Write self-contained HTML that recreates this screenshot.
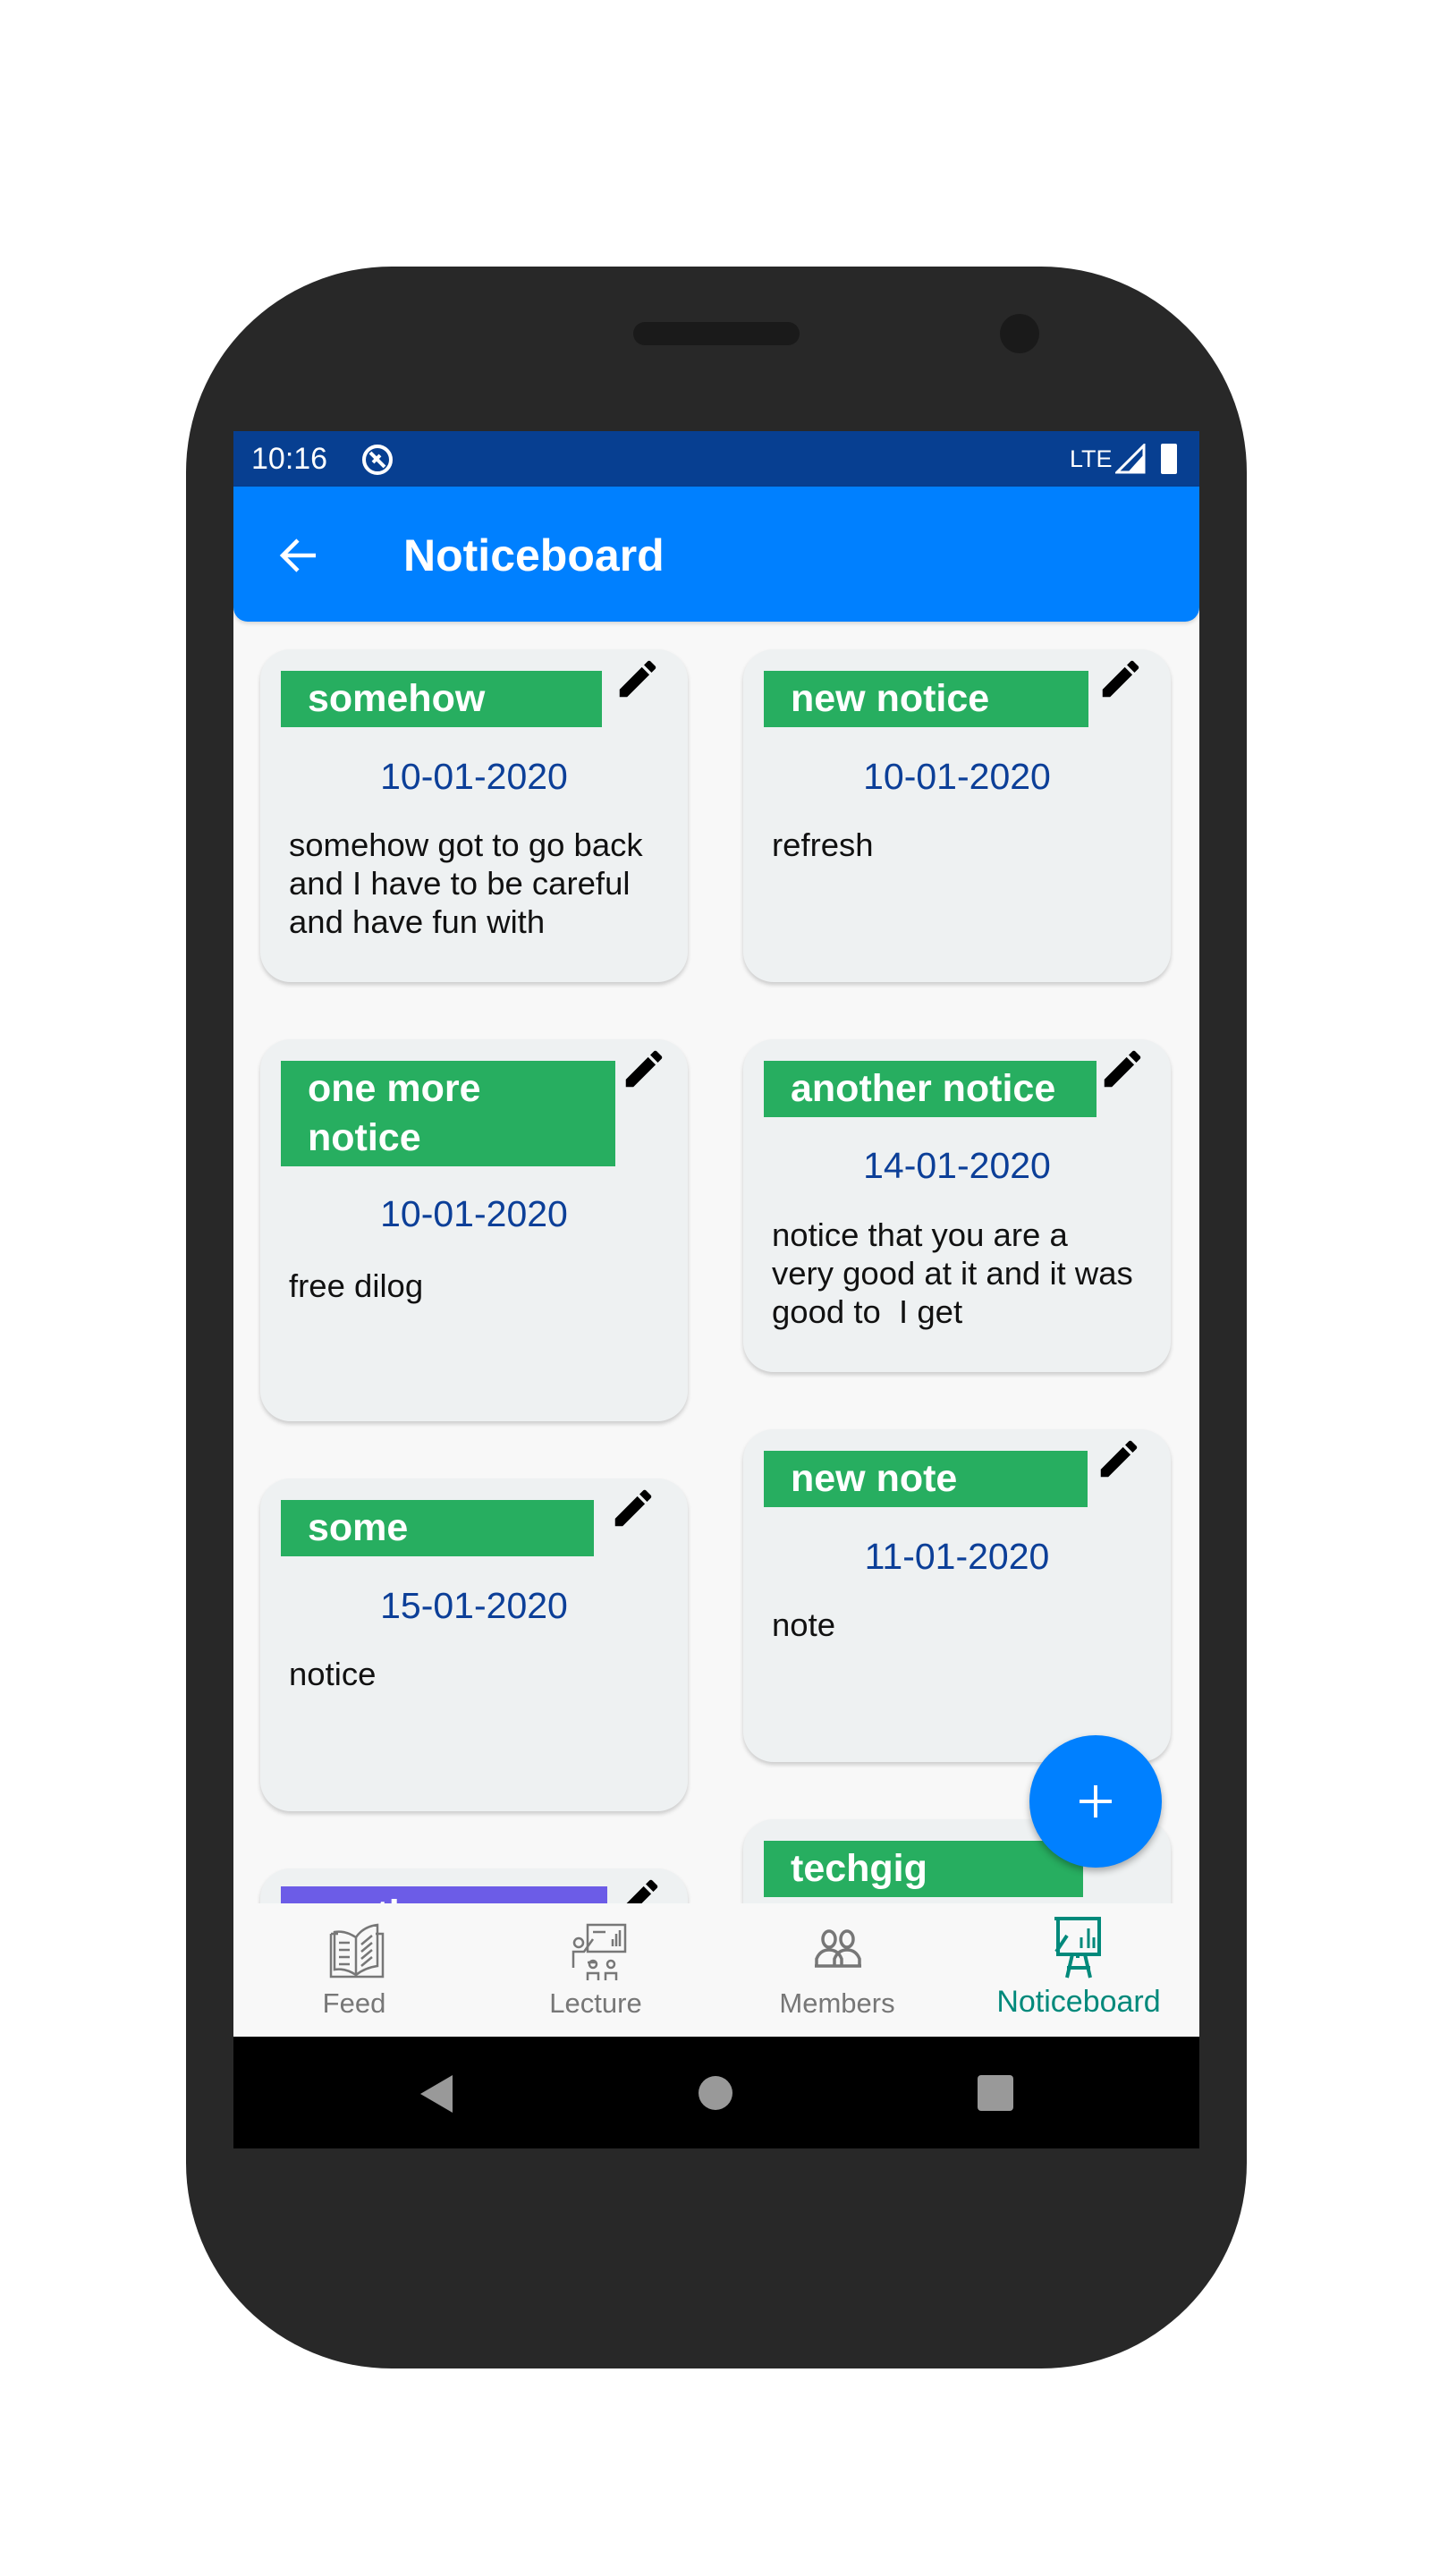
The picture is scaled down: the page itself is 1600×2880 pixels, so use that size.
<!DOCTYPE html>
<html><head><meta charset="utf-8"><style>
*{margin:0;padding:0;box-sizing:border-box}
body{width:1600px;height:2880px;background:#fff;position:relative;overflow:hidden;font-family:"Liberation Sans",sans-serif}
.abs{position:absolute}
.phone{left:208px;top:298px;width:1186px;height:2350px;background:#282828;border-radius:230px}
.screen{left:261px;top:482px;width:1080px;height:1920px;background:#f8f8f8;overflow:hidden}
.card{position:absolute;width:478px;background:#eef1f2;border-radius:34px;box-shadow:0 3px 5px rgba(0,0,0,.18)}
.lbl{position:absolute;left:23px;top:24px;height:63px;background:#27ae60;color:#fff;font-weight:bold;font-size:43px;padding-left:30px;line-height:63px}
.pen{position:absolute;top:6px;width:54px;height:54px}
.date{position:absolute;left:0;width:100%;text-align:center;color:#0c3f98;font-size:41px}
.body{position:absolute;left:32px;color:#111;font-size:36.5px;line-height:43px}
.nav{position:absolute;top:1740px;width:270px;text-align:center;font-size:31px;color:#777}
</style></head><body>
<div class="abs phone"></div>
<div class="abs" style="left:708px;top:360px;width:186px;height:26px;border-radius:13px;background:#1a1a1a"></div>
<div class="abs" style="left:1118px;top:351px;width:44px;height:44px;border-radius:50%;background:#1a1a1a"></div>
<div class="abs screen">
 <div class="abs" style="left:0;top:0;width:1080px;height:62px;background:#073f91"></div>
 <div class="abs" style="left:20px;top:12px;color:#fff;font-size:34px">10:16</div>
 <svg class="abs" style="left:142px;top:13px" width="38" height="38" viewBox="0 0 38 38"><circle cx="19" cy="19" r="15" fill="none" stroke="#fff" stroke-width="4"/><path d="M11 11 L27 27 M14 22 L22 14" stroke="#fff" stroke-width="4"/></svg>
 <div class="abs" style="left:935px;top:16px;color:#fff;font-size:27px">LTE</div>
 <svg class="abs" style="left:986px;top:14px" width="34" height="34"><path d="M32 2 L32 32 L2 32 Z" fill="none" stroke="#fff" stroke-width="3"/><path d="M32 12 L32 32 L14 32Z" fill="#fff"/></svg>
 <div class="abs" style="left:1037px;top:14px;width:18px;height:34px;background:#fff;border-radius:2px"></div>
 <div class="abs" style="left:0;top:62px;width:1080px;height:151px;background:#0080ff;border-radius:0 0 16px 16px;box-shadow:0 2px 4px rgba(0,0,0,.15)"></div>
 <svg class="abs" style="left:50px;top:116px" width="46" height="46" viewBox="0 0 46 46"><path d="M42 23 H6 M22 6 L5 23 L22 40" fill="none" stroke="#fff" stroke-width="4.5"/></svg>
 <div class="abs" style="left:190px;top:110px;color:#fff;font-size:50px;font-weight:bold">Noticeboard</div>

 <div class="card" style="left:30px;top:244px;height:372px">
  <div class="lbl" style="width:359px">somehow</div>
  <svg class="pen" style="left:395px" viewBox="0 0 24 24"><path d="M3 17.25V21h3.75L17.81 9.94l-3.75-3.75L3 17.25zM20.71 7.04a1 1 0 0 0 0-1.41l-2.34-2.34a1 1 0 0 0-1.41 0l-1.83 1.83 3.75 3.75 1.83-1.83z"/></svg>
  <div class="date" style="top:119px">10-01-2020</div>
  <div class="body" style="top:197px">somehow got to go back<br>and I have to be careful<br>and have fun with</div>
 </div>
 <div class="card" style="left:570px;top:244px;height:372px">
  <div class="lbl" style="width:363px">new notice</div>
  <svg class="pen" style="left:395px" viewBox="0 0 24 24"><path d="M3 17.25V21h3.75L17.81 9.94l-3.75-3.75L3 17.25zM20.71 7.04a1 1 0 0 0 0-1.41l-2.34-2.34a1 1 0 0 0-1.41 0l-1.83 1.83 3.75 3.75 1.83-1.83z"/></svg>
  <div class="date" style="top:119px">10-01-2020</div>
  <div class="body" style="top:197px">refresh</div>
 </div>

 <div class="card" style="left:30px;top:680px;height:427px">
  <div class="lbl" style="width:374px;height:118px;line-height:55px;padding-top:4px">one more<br>notice</div>
  <svg class="pen" style="left:402px;top:6px" viewBox="0 0 24 24"><path d="M3 17.25V21h3.75L17.81 9.94l-3.75-3.75L3 17.25zM20.71 7.04a1 1 0 0 0 0-1.41l-2.34-2.34a1 1 0 0 0-1.41 0l-1.83 1.83 3.75 3.75 1.83-1.83z"/></svg>
  <div class="date" style="top:172px">10-01-2020</div>
  <div class="body" style="top:254px">free dilog</div>
 </div>
 <div class="card" style="left:570px;top:680px;height:372px">
  <div class="lbl" style="width:372px">another notice</div>
  <svg class="pen" style="left:397px" viewBox="0 0 24 24"><path d="M3 17.25V21h3.75L17.81 9.94l-3.75-3.75L3 17.25zM20.71 7.04a1 1 0 0 0 0-1.41l-2.34-2.34a1 1 0 0 0-1.41 0l-1.83 1.83 3.75 3.75 1.83-1.83z"/></svg>
  <div class="date" style="top:118px">14-01-2020</div>
  <div class="body" style="top:197px">notice that you are a<br>very good at it and it was<br>good to &nbsp;I get</div>
 </div>

 <div class="card" style="left:30px;top:1171px;height:372px">
  <div class="lbl" style="width:350px">some</div>
  <svg class="pen" style="left:390px" viewBox="0 0 24 24"><path d="M3 17.25V21h3.75L17.81 9.94l-3.75-3.75L3 17.25zM20.71 7.04a1 1 0 0 0 0-1.41l-2.34-2.34a1 1 0 0 0-1.41 0l-1.83 1.83 3.75 3.75 1.83-1.83z"/></svg>
  <div class="date" style="top:119px">15-01-2020</div>
  <div class="body" style="top:197px">notice</div>
 </div>
 <div class="card" style="left:570px;top:1116px;height:372px">
  <div class="lbl" style="width:362px">new note</div>
  <svg class="pen" style="left:393px" viewBox="0 0 24 24"><path d="M3 17.25V21h3.75L17.81 9.94l-3.75-3.75L3 17.25zM20.71 7.04a1 1 0 0 0 0-1.41l-2.34-2.34a1 1 0 0 0-1.41 0l-1.83 1.83 3.75 3.75 1.83-1.83z"/></svg>
  <div class="date" style="top:119px">11-01-2020</div>
  <div class="body" style="top:197px">note</div>
 </div>

 <div class="card" style="left:30px;top:1607px;height:300px">
  <div class="lbl" style="width:365px;background:#6c5ce7;top:20px">another</div>
  <svg class="pen" style="left:397px" viewBox="0 0 24 24"><path d="M3 17.25V21h3.75L17.81 9.94l-3.75-3.75L3 17.25zM20.71 7.04a1 1 0 0 0 0-1.41l-2.34-2.34a1 1 0 0 0-1.41 0l-1.83 1.83 3.75 3.75 1.83-1.83z"/></svg>
 </div>
 <div class="card" style="left:570px;top:1552px;height:300px">
  <div class="lbl" style="width:357px">techgig</div>
 </div>
 <div class="abs" style="left:890px;top:1458px;width:148px;height:148px;border-radius:50%;background:#0080ff;box-shadow:0 4px 8px rgba(0,0,0,.3)"></div>
 <svg class="abs" style="left:938px;top:1506px" width="52" height="52"><path d="M26 8 V44 M8 26 H44" stroke="#fff" stroke-width="4"/></svg>

 <div class="abs" style="left:0;top:1646px;width:1080px;height:149px;background:#f8f8f8"></div>
 <svg class="abs" style="left:105px;top:1668px" width="66" height="66" viewBox="0 0 66 66" fill="none" stroke="#777" stroke-width="2.5"><path d="M4 12 H12 M4 12 V60 H62 V12 H54"/><path d="M8 10 Q20 8 32 16 V58 Q20 50 8 52Z M32 16 Q40 4 56 2 V48 Q42 50 32 58"/><path d="M13 22h12M13 30h12M13 38h12M13 46h12M38 24l12-10M38 32l12-10M38 40l12-10M38 48l12-10"/></svg>
 <svg class="abs" style="left:376px;top:1668px" width="66" height="66" viewBox="0 0 66 66" fill="none" stroke="#777" stroke-width="2.5"><rect x="20" y="2" width="42" height="30"/><path d="M26 10h14M52 26V12M56 26V8M48 26v-8"/><circle cx="10" cy="22" r="5"/><path d="M4 50V32h12l10-14M20 44h10"/><circle cx="26" cy="46" r="4"/><circle cx="46" cy="46" r="4"/><path d="M20 64v-8h12v8M40 64v-8h12v8"/></svg>
 <svg class="abs" style="left:646px;top:1672px" width="60" height="60" viewBox="0 0 60 60" fill="none" stroke="#777" stroke-width="3.5"><ellipse cx="20" cy="14" rx="7" ry="9"/><ellipse cx="40" cy="14" rx="7" ry="9"/><path d="M6 44v-8q4-10 14-10q10 0 14 10v8M26 44v-8q4-10 14-10q10 0 14 10v8M4 44h52"/></svg>
 <svg class="abs" style="left:914px;top:1660px" width="60" height="72" viewBox="0 0 60 72" fill="none" stroke="#00897b" stroke-width="4"><path d="M4 3h52"/><path d="M8 5v38h46V5"/><path d="M24 43l-6 26M38 43l6 26M30 43v4M18 58h26M6 40l12-18"/><path d="M34 36V24M42 36V14M48 36V24" stroke-width="3"/></svg>
 <div class="nav" style="left:0">Feed</div>
 <div class="nav" style="left:270px">Lecture</div>
 <div class="nav" style="left:540px">Members</div>
 <div class="nav" style="left:810px;color:#00897b;font-size:34px;top:1737px">Noticeboard</div>

 <div class="abs" style="left:0;top:1795px;width:1080px;height:125px;background:#000"></div>
 <svg class="abs" style="left:205px;top:1836px" width="42" height="46"><path d="M40 2 V44 L4 23Z" fill="#999"/></svg>
 <div class="abs" style="left:520px;top:1839px;width:38px;height:38px;border-radius:50%;background:#999"></div>
 <div class="abs" style="left:832px;top:1838px;width:40px;height:40px;border-radius:4px;background:#999"></div>
</div>
</body></html>
